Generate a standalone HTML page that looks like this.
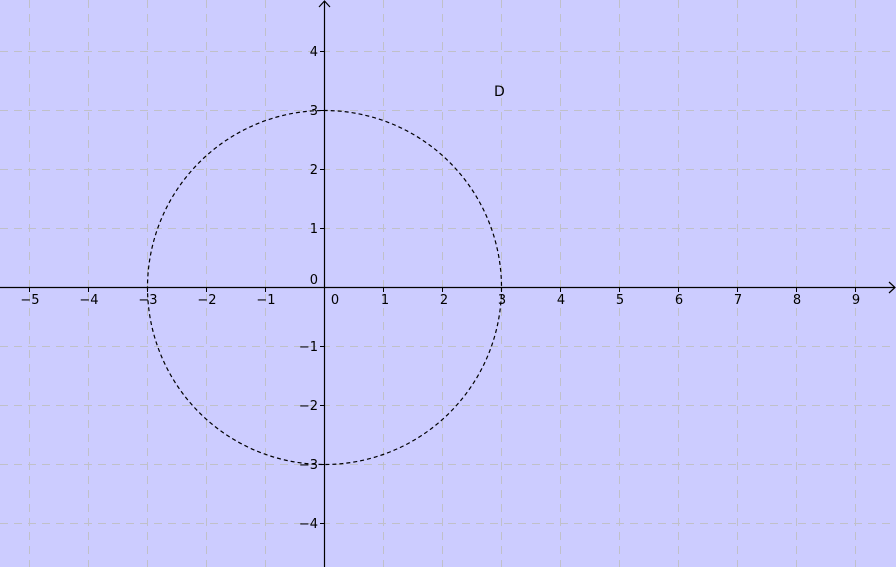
<!DOCTYPE html>
<html><head><style>html,body{margin:0;padding:0;background:#ccccff;}svg{display:block}</style></head>
<body>
<svg width="896" height="567" xmlns="http://www.w3.org/2000/svg" font-family="'DejaVu Sans','Liberation Sans',sans-serif" font-size="13">
<rect width="896" height="567" fill="#ccccff"/>
<g stroke="#c0c0c8" stroke-width="1" stroke-dasharray="8,6">
<line x1="29.5" y1="0" x2="29.5" y2="567"/><line x1="88.5" y1="0" x2="88.5" y2="567"/><line x1="147.5" y1="0" x2="147.5" y2="567"/><line x1="206.5" y1="0" x2="206.5" y2="567"/><line x1="265.5" y1="0" x2="265.5" y2="567"/><line x1="383.5" y1="0" x2="383.5" y2="567"/><line x1="442.5" y1="0" x2="442.5" y2="567"/><line x1="501.5" y1="0" x2="501.5" y2="567"/><line x1="560.5" y1="0" x2="560.5" y2="567"/><line x1="619.5" y1="0" x2="619.5" y2="567"/><line x1="678.5" y1="0" x2="678.5" y2="567"/><line x1="737.5" y1="0" x2="737.5" y2="567"/><line x1="796.5" y1="0" x2="796.5" y2="567"/><line x1="855.5" y1="0" x2="855.5" y2="567"/>
<line x1="0" y1="51.5" x2="896" y2="51.5"/><line x1="0" y1="110.5" x2="896" y2="110.5"/><line x1="0" y1="169.5" x2="896" y2="169.5"/><line x1="0" y1="228.5" x2="896" y2="228.5"/><line x1="0" y1="346.5" x2="896" y2="346.5"/><line x1="0" y1="405.5" x2="896" y2="405.5"/><line x1="0" y1="464.5" x2="896" y2="464.5"/><line x1="0" y1="523.5" x2="896" y2="523.5"/>
</g>
<g stroke="#000" stroke-width="1.2" fill="none">
<line x1="0" y1="287.5" x2="895" y2="287.5"/>
<line x1="324.5" y1="567" x2="324.5" y2="1"/>
<polyline points="319,7 324.5,1 330,7"/>
<polyline points="889,282 895,287.5 889,293"/>
</g>
<g stroke="#000" stroke-width="1">
<line x1="29.5" y1="287" x2="29.5" y2="292"/><line x1="88.5" y1="287" x2="88.5" y2="292"/><line x1="147.5" y1="287" x2="147.5" y2="292"/><line x1="206.5" y1="287" x2="206.5" y2="292"/><line x1="265.5" y1="287" x2="265.5" y2="292"/><line x1="383.5" y1="287" x2="383.5" y2="292"/><line x1="442.5" y1="287" x2="442.5" y2="292"/><line x1="501.5" y1="287" x2="501.5" y2="292"/><line x1="560.5" y1="287" x2="560.5" y2="292"/><line x1="619.5" y1="287" x2="619.5" y2="292"/><line x1="678.5" y1="287" x2="678.5" y2="292"/><line x1="737.5" y1="287" x2="737.5" y2="292"/><line x1="796.5" y1="287" x2="796.5" y2="292"/><line x1="855.5" y1="287" x2="855.5" y2="292"/>
<line x1="320" y1="51.5" x2="324" y2="51.5"/><line x1="320" y1="110.5" x2="324" y2="110.5"/><line x1="320" y1="169.5" x2="324" y2="169.5"/><line x1="320" y1="228.5" x2="324" y2="228.5"/><line x1="320" y1="346.5" x2="324" y2="346.5"/><line x1="320" y1="405.5" x2="324" y2="405.5"/><line x1="320" y1="464.5" x2="324" y2="464.5"/><line x1="320" y1="523.5" x2="324" y2="523.5"/>
</g>
<circle cx="324.5" cy="287.5" r="177" fill="none" stroke="#000" stroke-width="1.2" stroke-dasharray="4,3"/>
<g fill="#000" text-anchor="middle">
<text x="30" y="304">−5</text><text x="89" y="304">−4</text><text x="148" y="304">−3</text><text x="207" y="304">−2</text><text x="266" y="304">−1</text><text x="335" y="304">0</text><text x="385" y="304">1</text><text x="444" y="304">2</text><text x="502" y="304">3</text><text x="561" y="304">4</text><text x="620" y="304">5</text><text x="679" y="304">6</text><text x="738" y="304">7</text><text x="797" y="304">8</text><text x="856" y="304">9</text>
</g>
<g fill="#000" text-anchor="end">
<text x="318" y="56">4</text><text x="318" y="115">3</text><text x="318" y="174">2</text><text x="318" y="233">1</text><text x="318" y="284">0</text><text x="318" y="351">−1</text><text x="318" y="410">−2</text><text x="318" y="469">−3</text><text x="318" y="528">−4</text>
</g>
<text x="494" y="96" fill="#000" font-size="14">D</text>
</svg>
</body></html>
